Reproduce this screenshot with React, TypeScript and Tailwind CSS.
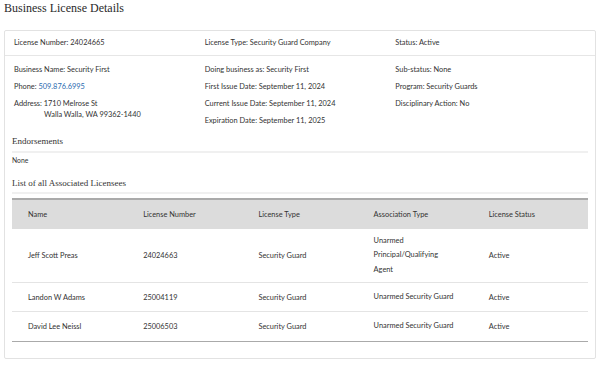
const sans = "font-['Lato','Liberation_Sans',sans-serif]";
const serif = "font-['Liberation_Serif','DejaVu_Serif',serif]";

type Row = { name: string; num: string; type: string; assoc: string[]; status: string };

const rows: Row[] = [
  { name: 'Jeff Scott Preas', num: '24024663', type: 'Security Guard', assoc: ['Unarmed', 'Principal/Qualifying', 'Agent'], status: 'Active' },
  { name: 'Landon W Adams', num: '25004119', type: 'Security Guard', assoc: ['Unarmed Security Guard'], status: 'Active' },
  { name: 'David Lee Neissl', num: '25006503', type: 'Security Guard', assoc: ['Unarmed Security Guard'], status: 'Active' },
];

function Cell({ children }: { children: React.ReactNode }) {
  return <div className="px-4">{children}</div>;
}

export default function App() {
  return (
    <div className={`w-[600px] h-[366px] bg-white text-[#333] ${sans} text-[7.4px] overflow-hidden`}>
      <h1 className={`${serif} text-[12px] leading-none px-[4px] pt-[2px] h-[30px] text-[#2a2a2a]`}>
        Business License Details
      </h1>
      <div className="mx-[4px] w-[592px] h-[329px] border border-[#e2e2e2] rounded-[2px] px-[7px]">
        <div className="grid grid-cols-3 h-[25px] items-center border-b border-[#e6e6e6] -mx-[7px] px-[9px]">
          <div>License Number: 24024665</div>
          <div>License Type: Security Guard Company</div>
          <div>Status: Active</div>
        </div>
        <div className="grid grid-cols-3 pt-[8px] -mx-[7px] px-[9px]">
          <div className="flex flex-col gap-[6px]">
            <div>Business Name: Security First</div>
            <div>
              Phone: <span className="text-[#2b6cb0]">509.876.6995</span>
            </div>
            <div className="leading-[11px]">
              <div>Address: 1710 Melrose St</div>
              <div className="pl-[30px]">Walla Walla, WA 99362-1440</div>
            </div>
          </div>
          <div className="flex flex-col gap-[6px]">
            <div>Doing business as: Security First</div>
            <div>First Issue Date: September 11, 2024</div>
            <div>Current Issue Date: September 11, 2024</div>
            <div>Expiration Date: September 11, 2025</div>
          </div>
          <div className="flex flex-col gap-[6px]">
            <div>Sub-status: None</div>
            <div>Program: Security Guards</div>
            <div>Disciplinary Action: No</div>
          </div>
        </div>

        <h2 className={`${serif} text-[9px] leading-[13.5px] mt-[9px] pb-[2px] border-b-2 border-[#f0f0f0]`}>Endorsements</h2>
        <div className="text-[6.8px] leading-[9.75px] mt-[3px]">None</div>

        <h2 className={`${serif} text-[9px] leading-[13.5px] mt-[11px] pb-[2px] border-b-2 border-[#f0f0f0]`}>
          List of all Associated Licensees
        </h2>

        <div className="mt-[4px] border-t-2 border-b border-[#aaa]">
          <div className="grid grid-cols-5 bg-[#dcdcdc] h-[29px] items-center">
            <Cell>Name</Cell>
            <Cell>License Number</Cell>
            <Cell>License Type</Cell>
            <Cell>Association Type</Cell>
            <Cell>License Status</Cell>
          </div>
          {rows.map((r, i) => (
            <div
              key={r.num}
              className={`grid grid-cols-5 items-center ${i === 0 ? 'h-[54px]' : 'h-[29px]'} ${i < rows.length - 1 ? 'border-b border-[#e4e4e4]' : ''}`}
            >
              <Cell>{r.name}</Cell>
              <Cell>{r.num}</Cell>
              <Cell>{r.type}</Cell>
              <div className="px-4 leading-[14.5px]">
                {r.assoc.map((a) => (
                  <div key={a}>{a}</div>
                ))}
              </div>
              <Cell>{r.status}</Cell>
            </div>
          ))}
        </div>
      </div>
    </div>
  );
}
